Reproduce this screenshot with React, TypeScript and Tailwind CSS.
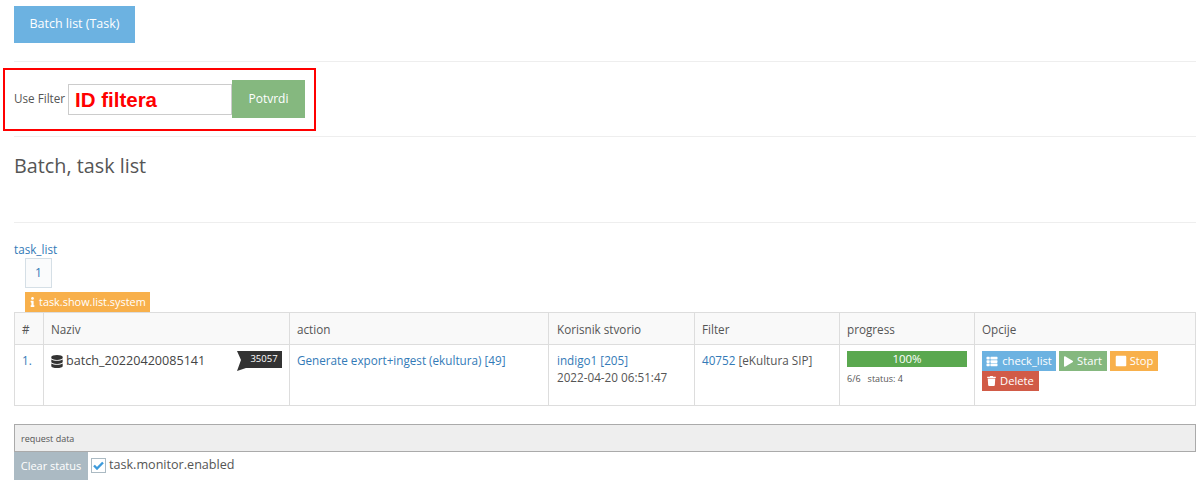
import React from "react";
import { FaDatabase, FaInfo, FaPlay, FaStop, FaTrash, FaThList } from "react-icons/fa";

const th = "border border-[#dddddd] bg-[#f9f9f9] pl-[7px] pr-1 pt-[2px] pb-0 h-[32px] text-left font-normal text-[11.7px] text-[#555555] align-middle";
const td = "border border-[#dddddd] pl-[7px] pr-[7px] pt-[6px] pb-0 align-top text-[11.7px]";
const tdText = "border border-[#dddddd] pl-[7px] pr-[7px] pt-[7px] pb-0 align-top text-[11.7px]";
const link = "text-[#337ab7]";

export default function App() {
  return (
    <div className="h-[485px] w-[1202px] overflow-hidden bg-white font-['Open_Sans',sans-serif] text-[12px] text-[#555555]">
      <div className="pl-[14px] pr-[6px]">
        <div className="pt-[6px]">
          <div className="flex h-[37px] w-[121px] items-center justify-center bg-[#6cb2e1] text-[12.5px] text-white">Batch list (Task)</div>
        </div>
        <div className="mt-[18px] h-[1px] bg-[#eeeeee]" />
        <div className="relative flex h-[74px] items-start">
          <div className="absolute left-[-11px] top-[6px] h-[63px] w-[313px] border-2 border-[#ff0000]" />
          <div className="mt-[28px] w-[54px] text-[11.7px] leading-[16px] text-[#555555]">Use Filter</div>
          <div className="mt-[22px] flex h-[31px] w-[164px] items-center border border-[#cccccc] pl-[6px] pt-[2px] font-['Liberation_Sans',sans-serif] text-[20.5px] font-bold text-[#ff0000]">ID filtera</div>
          <div className="mt-[18px] flex h-[38px] w-[73px] items-center justify-center bg-[#85b87f] text-[12px] text-white">Potvrdi</div>
        </div>
        <div className="h-[1px] bg-[#eeeeee]" />
        <h1 className="mt-[15px] text-[19.8px] font-normal leading-[28px] text-[#555555]">Batch, task list</h1>
        <div className="mt-[42px] h-[1px] bg-[#eeeeee]" />
        <div className="mt-[18px] text-[11.7px] leading-[17px] text-[#337ab7]">task_list</div>
        <div className="ml-[11px] flex h-[30px] w-[27px] items-center justify-center border border-[#d5dfe6] bg-[#fafbfc] text-[12px] text-[#337ab7]">1</div>
        <div className="ml-[11px] mt-[4px] flex h-[20px] w-[125px] items-center gap-[4px] bg-[#f8b04b] pl-[5px] text-[10.9px] text-white">
          <FaInfo className="h-[10px] w-[5px]" />
          <span>task.show.list.system</span>
        </div>
        <table className="w-[1181px] table-fixed border-collapse">
          <colgroup>
            <col className="w-[29px]" />
            <col className="w-[246px]" />
            <col className="w-[259px]" />
            <col className="w-[146px]" />
            <col className="w-[145px]" />
            <col className="w-[135px]" />
            <col className="w-[221px]" />
          </colgroup>
          <thead>
            <tr>
              <th className={th}>#</th>
              <th className={th}>Naziv</th>
              <th className={th}>action</th>
              <th className={`${th} !pl-[8px]`}>Korisnik stvorio</th>
              <th className={th}>Filter</th>
              <th className={th}>progress</th>
              <th className={th}>Opcije</th>
            </tr>
          </thead>
          <tbody className="text-[#555555]">
            <tr className="h-[61px]">
              <td className={tdText}><span className={link}>1.</span></td>
              <td className={td}>
                <div className="flex items-start justify-between">
                  <div className="mt-[1px] flex items-center gap-[3px] text-[12.6px] leading-[18px] text-[#444444]">
                    <FaDatabase className="h-[13px] w-[12px] text-[#333333]" />
                    <span>batch_20220420085141</span>
                  </div>
                  <div className="relative flex h-[20px] items-start">
                    <svg width="10" height="20" viewBox="0 0 10 20" className="-mr-px">
                      <path d="M0 0H10V17H9L0 20L4 9Z" fill="#333333" />
                    </svg>
                    <div className="flex h-[17px] w-[36px] items-center justify-center bg-[#333333] text-[9.5px] text-white">35057</div>
                  </div>
                </div>
              </td>
              <td className={tdText}><span className={link}>Generate export+ingest (ekultura) [49]</span></td>
              <td className={`${tdText} !pl-[8px] leading-[17px]`}>
                <div className={link}>indigo1 [205]</div>
                <div>2022-04-20 06:51:47</div>
              </td>
              <td className={tdText}><span className={link}>40752</span> [eKultura SIP]</td>
              <td className={td}>
                <div className="flex h-[16px] w-[120px] items-center justify-center bg-[#5aa84f] text-[11.5px] text-white">100%</div>
                <div className="mt-[6px] text-[9px] leading-[12px]">6/6&nbsp;&nbsp;&nbsp;status: 4</div>
              </td>
              <td className={td}>
                <div className="flex flex-wrap gap-x-[3px] gap-y-0">
                  <div className="flex h-[20px] w-[74px] items-center justify-center gap-[4px] bg-[#6cb2e1] text-[11.2px] text-white"><FaThList className="h-[11px] w-[12px]" />check_list</div>
                  <div className="flex h-[20px] w-[48px] items-center justify-center gap-[4px] bg-[#85b87f] text-[11.2px] text-white"><FaPlay className="h-[11px] w-[9px]" />Start</div>
                  <div className="flex h-[20px] w-[48px] items-center justify-center gap-[3px] bg-[#f8b04b] text-[11.2px] text-white"><FaStop className="h-[12px] w-[12px]" />Stop</div>
                  <div className="flex h-[20px] w-[57px] items-center justify-center gap-[4px] bg-[#d15b47] text-[11.2px] text-white"><FaTrash className="h-[10px] w-[9px]" />Delete</div>
                </div>
              </td>
            </tr>
          </tbody>
        </table>
        <div className="mt-[18px] flex h-[28px] w-[1182px] items-center border border-[#aaaaaa] bg-[#eeeeee] pl-[6px] pt-[2px] text-[9px] text-[#555555]">request data</div>
        <div className="flex items-start">
          <div className="flex h-[28px] w-[74px] items-center justify-center bg-[#abbac3] text-[11px] text-white">Clear status</div>
          <div className="ml-[3px] mt-[6px] flex h-[15px] w-[15px] items-center justify-center border border-[#abbac3] bg-white">
            <svg width="11" height="9" viewBox="0 0 11 9"><path d="M1 4.5L4 7.5L10 1.5" fill="none" stroke="#3d9bdc" strokeWidth="2.4" /></svg>
          </div>
          <div className="ml-[3px] mt-[4px] text-[12.6px] leading-[17px] text-[#555555]">task.monitor.enabled</div>
        </div>
      </div>
    </div>
  );
}
